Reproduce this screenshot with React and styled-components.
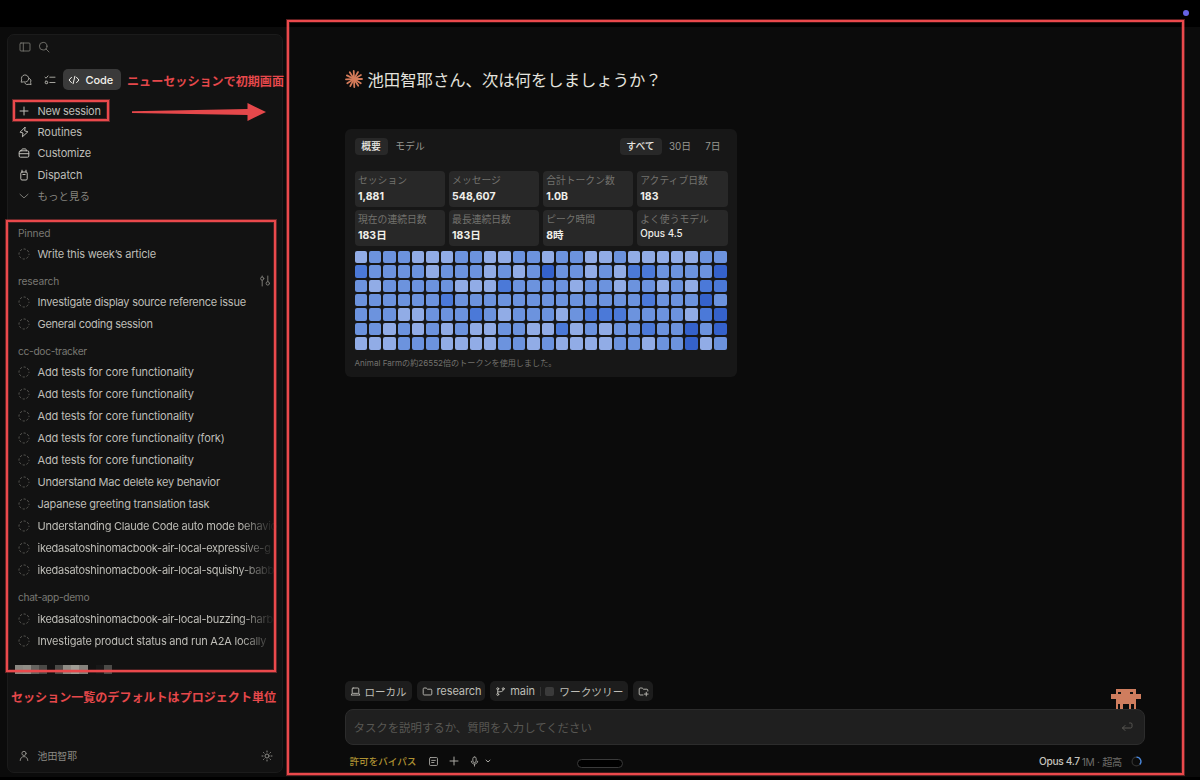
import React from "react";
import styled, { createGlobalStyle } from "styled-components";

const Global = createGlobalStyle`
  * { box-sizing: border-box; }
  body { margin: 0; background: #000; overflow: hidden; }
`;

const latin = `Inter, "Noto Sans CJK JP", sans-serif`;
const RED = "#e5484b";

const Page = styled.div`
  position: relative;
  width: 1200px;
  height: 780px;
  display: flex;
  flex-direction: column;
  background: #000;
  color: #bebdb7;
  font-family: ${latin};
  font-size: 11px;
`;
const TopBar = styled.div`
  height: 27px;
  flex: none;
`;
const Workspace = styled.div`
  height: 750px;
  display: flex;
  padding: 7px 0 0 7px;
  background: #0b0b0b;
`;
const Txt = styled.span`
  white-space: nowrap;
  letter-spacing: ${(p) => p.$ls || 0}px;
  font-size: ${(p) => (p.$size ? p.$size + "px" : "inherit")};
`;

/* sidebar */
const Sidebar = styled.aside`
  width: 276px;
  height: 739px;
  flex: none;
  display: flex;
  flex-direction: column;
  background: #121212;
  border: 1px solid #1b1b1b;
  border-radius: 7px;
`;
const WindowTools = styled.div`
  display: flex;
  gap: 7.5px;
  height: 23px;
  align-items: center;
  padding-left: 10.5px;
  color: #777671;
`;
const ModeTabs = styled.div`
  display: flex;
  align-items: center;
  margin-top: 10.5px;
  height: 22px;
  padding-left: 11.5px;
  color: #a3a29c;
`;
const ModeIcon = styled.span`
  display: flex;
  width: 24px;
`;
const ActiveMode = styled.div`
  display: flex;
  align-items: center;
  gap: 5.5px;
  width: 58px;
  height: 21px;
  margin-left: -4.5px;
  padding-left: 5px;
  border-radius: 5px;
  background: #3a3a3a;
  color: #f1f0eb;
  font-weight: 500;
`;
const Nav = styled.nav`
  display: flex;
  flex-direction: column;
  margin-top: 10px;
`;
const NavRow = styled.div`
  display: flex;
  align-items: center;
  height: 21.2px;
  padding-left: 10px;
  gap: 7.5px;
  color: ${(p) => (p.$dim ? "#85847f" : "#bebdb7")};
`;
const Sessions = styled.div`
  margin-top: 16.2px;
  display: flex;
  flex-direction: column;
`;
const GroupHead = styled.div`
  display: flex;
  align-items: center;
  justify-content: space-between;
  height: 20.4px;
  padding: 0 11px 0 10px;
  font-size: 10.2px;
  color: #797873;
`;
const Group = styled.div`
  margin-bottom: 5.8px;
`;
const SessionRow = styled.div`
  display: flex;
  align-items: center;
  height: 22px;
  padding-left: 10px;
  gap: 7.5px;
`;
const SessionName = styled(Txt)`
  width: 240px;
  mask-image: ${(p) => (p.$fade ? "linear-gradient(90deg,#000 202px,rgba(0,0,0,.08) 234px)" : "none")};
`;
const Mosaic = styled.div`
  display: flex;
  height: 8.5px;
  margin: 8px 0 0 7.4px;
`;
const Block = styled.i`
  width: ${(p) => p.$w}px;
  background: ${(p) => p.$c};
`;
const UserRow = styled.div`
  display: flex;
  align-items: center;
  justify-content: space-between;
  height: 22px;
  margin-top: auto;
  margin-bottom: 5.5px;
  padding: 0 9.5px 0 10px;
  color: #8b8a85;
`;
const UserName = styled.div`
  display: flex;
  align-items: center;
  gap: 7.5px;
`;

/* main */
const Main = styled.main`
  width: 800px;
  margin-left: 62px;
  height: 742px;
  display: flex;
  flex-direction: column;
`;
const Greeting = styled.h1`
  display: flex;
  align-items: center;
  gap: 4.5px;
  margin: 31px 0 0;
  height: 28px;
  font-size: 16.35px;
  font-weight: 400;
  color: #e4e3de;
`;
const StatsCard = styled.section`
  width: 392px;
  height: 248px;
  margin-top: 36px;
  padding: 8.5px 9.5px 0;
  border-radius: 6px;
  background: #171717;
`;
const TabBar = styled.div`
  display: flex;
  justify-content: space-between;
`;
const TabSet = styled.div`
  display: flex;
`;
const Tab = styled.div`
  height: 17px;
  width: ${(p) => p.$w}px;
  display: flex;
  align-items: center;
  justify-content: center;
  border-radius: 4px;
  font-size: 9.8px;
  background: ${(p) => (p.$on ? "#282828" : "transparent")};
  color: ${(p) => (p.$on ? "#e8e7e2" : "#989792")};
  font-weight: ${(p) => (p.$on ? 500 : 400)};
`;
const StatGrid = styled.div`
  display: grid;
  grid-template-columns: repeat(4, 90.8px);
  grid-auto-rows: 36px;
  gap: 3.3px;
  margin-top: 16.5px;
`;
const Stat = styled.div`
  display: flex;
  flex-direction: column;
  padding: 2px 3.5px;
  border-radius: 4px;
  background: #282828;
`;
const StatLabel = styled.div`
  height: 15px;
  line-height: 15px;
  font-size: 9.8px;
  color: #73726e;
  white-space: nowrap;
`;
const StatValue = styled.div`
  height: 16px;
  line-height: ${(p) => (p.$small ? 13 : 18)}px;
  font-size: ${(p) => (p.$small ? 9.8 : 10.5)}px;
  font-weight: ${(p) => (p.$small ? 500 : 700)};
  color: #efeee9;
`;
const HeatMap = styled.div`
  display: grid;
  grid-template-columns: repeat(26, 12.4px);
  grid-auto-rows: 12.4px;
  gap: 2px;
  margin-top: 4.6px;
`;
const Cell = styled.i`
  border-radius: 2px;
  background: ${(p) => ["#91ace6", "#6c93de", "#4b79d8", "#3562cb"][p.$level]};
`;
const Footnote = styled.div`
  margin-top: 6px;
  font-size: 8.1px;
  line-height: 15px;
  color: #73726e;
`;
const ChipRow = styled.div`
  display: flex;
  gap: 5px;
  margin-top: auto;
`;
const Chip = styled.div`
  display: flex;
  align-items: center;
  gap: ${(p) => p.$gap || 4}px;
  width: ${(p) => p.$w}px;
  height: 20px;
  padding-left: 4.5px;
  border-radius: 5px;
  background: #1d1d1d;
  color: #bebdb7;
`;
const Divider = styled.i`
  width: 1px;
  height: 9px;
  background: #343434;
`;
const CheckBox = styled.i`
  width: 9px;
  height: 9px;
  border-radius: 2px;
  background: #3a3a3a;
`;
const Composer = styled.div`
  position: relative;
  display: flex;
  align-items: center;
  justify-content: space-between;
  height: 36px;
  margin-top: 8px;
  padding: 0 11px 0 7.5px;
  border: 1px solid #2c2c2c;
  border-radius: 8px;
  background: #1f1f1f;
  color: #585753;
`;
const Mascot = styled.svg`
  position: absolute;
  right: 3px;
  top: -21px;
`;
const StatusRow = styled.div`
  display: flex;
  align-items: center;
  justify-content: space-between;
  height: 20px;
  margin: 6px 3px 5px 4.5px;
  color: #aaa9a3;
`;
const StatusTools = styled.div`
  display: flex;
  align-items: center;
  gap: 9px;
`;
const MicGroup = styled.div`
  display: flex;
  align-items: center;
  gap: 5px;
`;
const Bypass = styled(Txt)`
  width: 69px;
  font-size: 9.6px;
  font-weight: 500;
  color: #ad9132;
`;
const ModelInfo = styled.div`
  display: flex;
  align-items: center;
  gap: 2px;
  font-size: 10.2px;
  color: #6f6e6a;
`;
const ModelName = styled(Txt)`
  color: #c5c4be;
  font-weight: 500;
`;
const Ring = styled.svg`
  margin-left: 7px;
`;

/* annotations laid over the window */
const Frame = styled.div`
  position: absolute;
  left: ${(p) => p.$x}px;
  top: ${(p) => p.$y}px;
  width: ${(p) => p.$w}px;
  height: ${(p) => p.$h}px;
  border: 2px solid #ea494c;
  box-shadow: 0 0 0 1px rgba(229,72,75,.4), inset 0 0 0 1px rgba(229,72,75,.25);
`;
const Note = styled.div`
  position: absolute;
  left: ${(p) => p.$x}px;
  top: ${(p) => p.$y}px;
  line-height: 18px;
  font-weight: 700;
  font-size: ${(p) => p.$size}px;
  color: ${RED};
  white-space: nowrap;
`;
const Arrow = styled.svg`
  position: absolute;
  left: 132px;
  top: 103px;
`;
const Dot = styled.i`
  position: absolute;
  left: 1183px;
  top: 10px;
  width: 6px;
  height: 6px;
  border-radius: 50%;
  background: #6563e6;
`;
const HomePill = styled.i`
  position: absolute;
  left: 577px;
  top: 759px;
  width: 46px;
  height: 9px;
  border: 1px solid #3a3a3a;
  border-radius: 5px;
  background: #000;
`;

const Svg = styled.svg`
  flex: none;
  fill: none;
  stroke: currentColor;
  stroke-width: ${(p) => p.$sw || 1};
  stroke-linecap: round;
  stroke-linejoin: round;
`;
const shapes = {
  panel: <><rect x="1" y="2" width="10" height="8" rx="1" /><path d="M4.3 2v8" /></>,
  search: <><circle cx="5.2" cy="5.2" r="3.8" /><path d="M8 8l3 3" /></>,
  chat: <><path d="M1.2 7.8l.5-1.9A3.6 3.6 0 1 1 4 8z" /><path d="M9.2 4.2a3.2 3.2 0 0 1 1.4 4.4l.5 2-2.1-.4A3.3 3.3 0 0 1 4.8 9.3" /></>,
  tasks: <><path d="M1 3.2l1.1 1L4 1.9M5.8 3.2H11M5.8 8.5H11" /><rect x="1.2" y="7.2" width="2.5" height="2.5" rx=".7" /></>,
  code: <path d="M3.5 3.3L1 6l2.5 2.7M8.5 3.3L11 6 8.5 8.7M6.9 2.3L5.1 9.7" />,
  plus: <path d="M6 2v8M2 6h8" />,
  zap: <path d="M6.9 1.3L2.1 6.2l2.9.8-.6 3.8 5.5-5L7 4.9z" />,
  toolbox: <><rect x="1.2" y="3.8" width="9.6" height="6.4" rx="1.2" /><path d="M3.7 3.8V2.9c0-.6.4-1 1-1h2.6c.6 0 1 .4 1 1v.9M1.2 6.7h9.6" /></>,
  dispatch: <><rect x="2.8" y="3" width="6.4" height="8" rx="1.2" /><path d="M4 3V1.2M8 3V1.2M4.9 5.5h2.2" /></>,
  chevron: <path d="M2 4.3l4 3.6 4-3.6" />,
  dash: <circle cx="6" cy="6" r="5" strokeDasharray="2.25 1.68" strokeDashoffset="1.1" strokeLinecap="butt" />,
  sliders: <><path d="M3.2 5.2V11M3.2 1v1.1M8.8 1v5.6" /><circle cx="3.2" cy="3.6" r="1.6" /><circle cx="8.8" cy="8.4" r="1.7" /></>,
  user: <><circle cx="6" cy="3.4" r="2.1" /><path d="M2.2 10.5c0-2.3 1.6-3.9 3.8-3.9s3.8 1.6 3.8 3.9" /></>,
  sun: <><circle cx="6" cy="6" r="2" /><path d="M6 1v1M6 10v1M1 6h1M10 6h1M2.5 2.5l.6.6M8.9 8.9l.6.6M9.5 2.5l-.6.6M3.1 8.9l-.6.6" /></>,
  laptop: <><rect x="2.4" y="2.2" width="7.2" height="5.8" rx="1" /><path d="M2.4 8L1.2 9.9h9.6L9.6 8" /></>,
  folder: <path d="M1.3 3.2c0-.6.4-1 1-1h2.3L6 3.5h3.7c.6 0 1 .4 1 1v4.3c0 .6-.4 1-1 1H2.3c-.6 0-1-.4-1-1z" />,
  folderPlus: <path d="M5.5 9.8H2.3c-.6 0-1-.4-1-1V3.2c0-.6.4-1 1-1h2.3L6 3.5h3.7c.6 0 1 .4 1 1v1M9 6.8v4M7 8.8h4" />,
  branch: <><circle cx="3" cy="3" r="1.1" /><circle cx="3" cy="9.2" r="1.1" /><circle cx="9" cy="3" r="1.1" /><path d="M3 4.1v4M9 4.1c0 2.2-2.2 2.2-6 2.3" /></>,
  note: <><rect x="1.7" y="1.7" width="8.6" height="8.6" rx="1" /><path d="M4 4.8h4M4 7.1h2.5" /></>,
  mic: <><rect x="4.2" y="1" width="3.6" height="6.2" rx="1.8" /><path d="M2.5 5.7c0 4.2 7 4.2 7 0M6 9v2" /></>,
  enter: <path d="M8.6 2h1.2c.8 0 1.2.5 1.2 1.2v2.5c0 .8-.5 1.3-1.3 1.3H1.5M4 4.5L1.5 7 4 9.5" />,
};
const Icon = ({ name, size = 12, sw, color }) => (
  <Svg width={size} height={size} viewBox="0 0 12 12" $sw={sw} color={color}>{shapes[name]}</Svg>
);

const nav = [
  ["plus", "New session", -0.28],
  ["zap", "Routines", -0.05],
  ["toolbox", "Customize", -0.17],
  ["dispatch", "Dispatch", -0.1],
];
const add = "Add tests for core functionality";
const groups = [
  ["Pinned", -0.15, [["Write this week’s article", -0.17]]],
  ["research", -0.15, [["Investigate display source reference issue", -0.245], ["General coding session", -0.3]]],
  ["cc-doc-tracker", -0.3, [
    [add, -0.13], [add, -0.13], [add, -0.13], [add + " (fork)", -0.13], [add, -0.13],
    ["Understand Mac delete key behavior", -0.26],
    ["Japanese greeting translation task", -0.21],
    ["Understanding Claude Code auto mode behavio", -0.24, true],
    ["ikedasatoshinomacbook-air-local-expressive-g", -0.28, true],
    ["ikedasatoshinomacbook-air-local-squishy-babb", -0.28, true],
  ]],
  ["chat-app-demo", -0.33, [
    ["ikedasatoshinomacbook-air-local-buzzing-harb", -0.28, true],
    ["Investigate product status and run A2A locally", -0.22, true],
  ]],
];
const mosaic = [
  [8, "#8a8781"], [8, "#908d86"], [8, "#65635f"], [8, "#4a4946"], [8, "transparent"],
  [8, "#4b4a47"], [8, "#8f8c85"], [8, "#a09d95"], [9, "#85827c"], [8, "transparent"],
  [8, "#181818"], [8, "#4b4a47"],
];
const stats = [
  ["セッション", "1,881"], ["メッセージ", "548,607"], ["合計トークン数", "1.0B"], ["アクティブ日数", "183"],
  ["現在の連続日数", "183日"], ["最長連続日数", "183日"], ["ピーク時間", "8時"], ["よく使うモデル", "Opus 4.5", true],
];
const heat = [
  "01110001100110110010000011",
  "21111011101013110102211113",
  "10111110002111101101101022",
  "11111121111111111111211131",
  "11100111210111012221111023",
  "11010101001100201011211313",
  "00011100001101000011011301",
];
const rays = [0, 32, 58, 88, 118, 147, 178, 207, 238, 268, 300, 330];

export default function App() {
  return (
    <Page>
      <Global />
      <TopBar />
      <Workspace>
        <Sidebar>
          <WindowTools><Icon name="panel" sw={0.9} /><Icon name="search" sw={0.9} /></WindowTools>
          <ModeTabs>
            <ModeIcon><Icon name="chat" /></ModeIcon>
            <ModeIcon><Icon name="tasks" /></ModeIcon>
            <ActiveMode><Icon name="code" /><Txt $ls={-0.1}>Code</Txt></ActiveMode>
          </ModeTabs>
          <Nav>
            {nav.map(([icon, label, ls]) => (
              <NavRow key={label}><Icon name={icon} /><Txt $ls={ls}>{label}</Txt></NavRow>
            ))}
            <NavRow $dim><Icon name="chevron" sw={0.9} /><Txt $size={10.5}>もっと見る</Txt></NavRow>
          </Nav>
          <Sessions>
            {groups.map(([title, ls, items]) => (
              <Group key={title}>
                <GroupHead>
                  <Txt $ls={ls}>{title}</Txt>
                  {title === "research" && <Icon name="sliders" />}
                </GroupHead>
                {items.map(([name, spacing, fade], i) => (
                  <SessionRow key={i}>
                    <Icon name="dash" color="#5a5955" />
                    <SessionName $ls={spacing} $fade={fade}>{name}</SessionName>
                  </SessionRow>
                ))}
              </Group>
            ))}
          </Sessions>
          <Mosaic>{mosaic.map(([w, c], i) => <Block key={i} $w={w} $c={c} />)}</Mosaic>
          <UserRow>
            <UserName><Icon name="user" /><Txt $size={9.9}>池田智耶</Txt></UserName>
            <Icon name="sun" />
          </UserRow>
        </Sidebar>

        <Main>
          <Greeting>
            <svg width="18" height="18" viewBox="-9 -9 18 18" stroke="#d47b5a" strokeWidth="1.8" strokeLinecap="round">
              {rays.map((a) => <path key={a} d="M1 0H8" transform={`rotate(${a})`} />)}
            </svg>
            <Txt>池田智耶さん、次は何をしましょうか？</Txt>
          </Greeting>
          <StatsCard>
            <TabBar>
              <TabSet><Tab $on $w={33}>概要</Tab><Tab $w={45}>モデル</Tab></TabSet>
              <TabSet><Tab $on $w={42}>すべて</Tab><Tab $w={37}>30日</Tab><Tab $w={29}>7日</Tab></TabSet>
            </TabBar>
            <StatGrid>
              {stats.map(([label, value, small]) => (
                <Stat key={label}><StatLabel>{label}</StatLabel><StatValue $small={small}>{value}</StatValue></Stat>
              ))}
            </StatGrid>
            <HeatMap>
              {heat.join("").split("").map((v, i) => <Cell key={i} $level={+v} />)}
            </HeatMap>
            <Footnote>Animal Farmの約26552倍のトークンを使用しました。</Footnote>
          </StatsCard>

          <ChipRow>
            <Chip $w={67}><Icon name="laptop" size={11} /><Txt $size={10.5}>ローカル</Txt></Chip>
            <Chip $w={68}><Icon name="folder" size={11} /><Txt $ls={-0.1}>research</Txt></Chip>
            <Chip $w={138} $gap={4.8}>
              <Icon name="branch" size={11} /><Txt $ls={-0.1}>main</Txt><Divider /><CheckBox /><Txt $size={10.7}>ワークツリー</Txt>
            </Chip>
            <Chip $w={20}><Icon name="folderPlus" size={11} /></Chip>
          </ChipRow>
          <Composer>
            <Txt $size={11.4}>タスクを説明するか、質問を入力してください</Txt>
            <Icon name="enter" size={12} />
            <Mascot width="30" height="20" viewBox="0 0 30 20" shapeRendering="crispEdges">
              <path fill="#cf7d5e" d="M5 0h20v5h5v5h-5v10h-2v-5h-3v5h-2v-5h-6v5h-3v-5h-2v5H5V10H0V5h5z" />
              <path fill="#111" d="M7 3h3v2H7zM19 3h3v2h-3z" />
            </Mascot>
          </Composer>
          <StatusRow>
            <StatusTools>
              <Bypass>許可をバイパス</Bypass>
              <Icon name="note" size={11} />
              <Icon name="plus" />
              <MicGroup><Icon name="mic" size={11} /><Icon name="chevron" size={6} sw={2} /></MicGroup>
            </StatusTools>
            <ModelInfo>
              <ModelName $ls={-0.35}>Opus 4.7</ModelName><Txt $ls={-0.3}>1M · 超高</Txt>
              <Ring width="11" height="11" viewBox="0 0 11 11" fill="none" strokeWidth="1.3">
                <circle cx="5.5" cy="5.5" r="4.4" stroke="#30302f" />
                <path d="M5.5 1.1a4.4 4.4 0 0 1 3.2 7.4" stroke="#4788e0" />
              </Ring>
            </ModelInfo>
          </StatusRow>
        </Main>
      </Workspace>

      <Frame $x={287} $y={20} $w={897} $h={755} />
      <Frame $x={13} $y={100} $w={96} $h={21} />
      <Frame $x={6} $y={220} $w={270} $h={452} />
      <Note $x={127} $y={73} $size={12.08}>ニューセッションで初期画面</Note>
      <Note $x={11} $y={689} $size={12.05}>セッション一覧のデフォルトはプロジェクト単位</Note>
      <Arrow width="135" height="18" viewBox="0 0 135 18">
        <path d="M0 8.2L115.5 6V0L134 9l-18.5 9v-6L0 10z" fill={RED} />
      </Arrow>
      <HomePill />
      <Dot />
    </Page>
  );
}
